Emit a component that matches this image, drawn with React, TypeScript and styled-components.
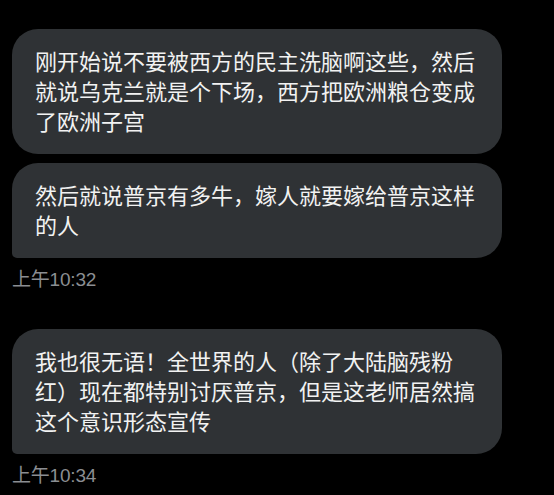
import * as React from "react";
import styled, { createGlobalStyle } from "styled-components";

const GlobalStyle = createGlobalStyle`
  html, body {
    margin: 0;
    padding: 0;
    background: #000;
  }
  body {
    font-family: "Noto Sans CJK SC", "Noto Sans", sans-serif;
  }
`;

const Page = styled.main`
  min-height: 100vh;
  padding: 29px 0 0 12px;
  box-sizing: border-box;

  display: flex;
  flex-direction: column;
  gap: 38px;
`;

const Group = styled.section`
  display: flex;
  flex-direction: column;
  align-items: flex-start;
  gap: 9px;
`;

const Bubble = styled.div<{ $last: boolean }>`
  width: 490px;
  box-sizing: border-box;
  padding: 16px 25px 19px 23px;
  background: #2f3235;
  color: #f2f2f2;
  font-size: 22px;
  line-height: 30px;
  border-radius: 26px 26px 26px ${(p) => (p.$last ? "5px" : "26px")};
`;

const Time = styled.time`
  margin-top: 2px;
  color: #8b8e92;
  font-family: "Liberation Sans", "Noto Sans CJK SC", sans-serif;
  font-size: 19px;
  line-height: 22px;
  letter-spacing: -0.2px;
`;

interface ChatGroup {
  time: string;
  messages: string[];
}

const groups: ChatGroup[] = [
  {
    time: "上午10:32",
    messages: [
      "刚开始说不要被西方的民主洗脑啊这些，然后就说乌克兰就是个下场，西方把欧洲粮仓变成了欧洲子宫",
      "然后就说普京有多牛，嫁人就要嫁给普京这样的人",
    ],
  },
  {
    time: "上午10:34",
    messages: [
      "我也很无语！全世界的人（除了大陆脑残粉红）现在都特别讨厌普京，但是这老师居然搞这个意识形态宣传",
    ],
  },
];

export default function App() {
  return (
    <>
      <GlobalStyle />
      <Page>
        {groups.map((g) => (
          <Group key={g.time}>
            {g.messages.map((m, i) => (
              <Bubble key={i} $last={i === g.messages.length - 1}>
                {m}
              </Bubble>
            ))}
            <Time>{g.time}</Time>
          </Group>
        ))}
      </Page>
    </>
  );
}
